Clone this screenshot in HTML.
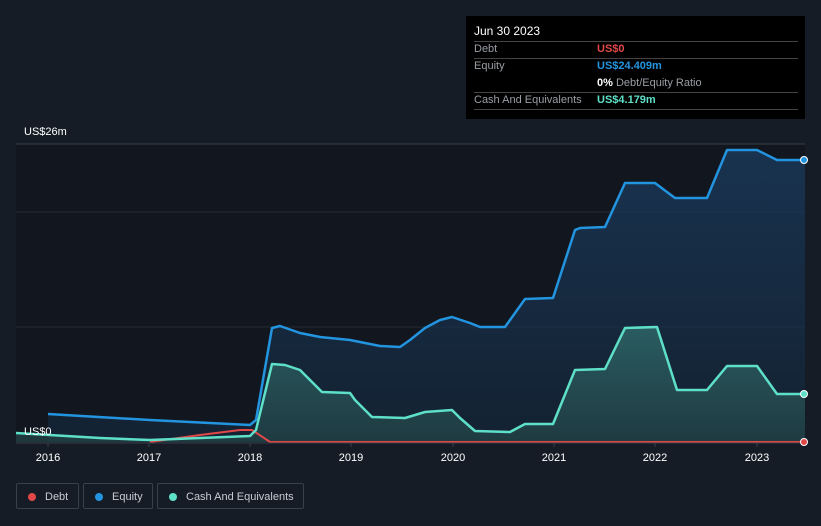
<!DOCTYPE html>
<html><head><meta charset="utf-8"><style>
body{margin:0;width:821px;height:526px;background:#161c26;font-family:"Liberation Sans",sans-serif;overflow:hidden;position:relative}
.tip{position:absolute;left:466px;top:16px;width:339px;height:103px;background:#000}
.tip div{position:absolute;font-size:11px;color:#9a9ea5}
.leg{position:absolute;top:483px;height:26px;border:1px solid #3a404a;border-radius:2px;color:#c8ccd2;font-size:11px;line-height:26px;box-sizing:border-box}
.leg i{position:absolute;left:11px;top:9px;width:8px;height:8px;border-radius:50%}
</style></head><body>
<svg width="821" height="526" style="position:absolute;left:0;top:0">
<defs>
<linearGradient id="eg" x1="0" y1="0" x2="0" y2="1"><stop offset="0" stop-color="#1a3a5c" stop-opacity=".8"/><stop offset="1" stop-color="#152a40" stop-opacity=".6"/></linearGradient>
<linearGradient id="cg" x1="0" y1="0" x2="0" y2="1"><stop offset="0" stop-color="#2f6a6a" stop-opacity=".8"/><stop offset="1" stop-color="#234548" stop-opacity=".7"/></linearGradient>
</defs>
<rect x="16" y="144" width="789" height="298" fill="#12161e"/>
<line x1="16" y1="144" x2="805" y2="144" stroke="#3a3f48"/>
<line x1="16" y1="212" x2="805" y2="212" stroke="#262b33"/>
<line x1="16" y1="327" x2="805" y2="327" stroke="#262b33"/>
<path d="M48,414 L150,420 L250,425 L256,420 L272,328 L280,326 L300,333 L320,337 L350,340 L380,346 L400,347 L410,340 L425,328 L440,320 L452,317 L470,323 L480,327 L505,327 L525,299 L553,298 L575,230 L580,228 L605,227 L625,183 L655,183 L675,198 L707,198 L727,150 L757,150 L777,160 L805,160 L805,442 L48,442Z" fill="url(#eg)"/>
<path d="M16,433 L100,438 L150,440 L250,436 L256,430 L272,364 L285,365 L300,370 L310,380 L322,392 L350,393 L355,400 L372,417 L405,418 L425,412 L452,410 L460,418 L475,431 L510,432 L525,424 L553,424 L575,370 L605,369 L625,328 L657,327 L677,390 L707,390 L727,366 L757,366 L777,394 L805,394 L805,442 L16,442Z" fill="url(#cg)"/>
<path d="M48,414 L150,420 L250,425 L256,420 L272,328 L280,326 L300,333 L320,337 L350,340 L380,346 L400,347 L410,340 L425,328 L440,320 L452,317 L470,323 L480,327 L505,327 L525,299 L553,298 L575,230 L580,228 L605,227 L625,183 L655,183 L675,198 L707,198 L727,150 L757,150 L777,160 L805,160" fill="none" stroke="#2394df" stroke-width="2.5" stroke-linejoin="round"/>
<path d="M150,442 L200,435 L240,430 L252,430 L270,442 L805,442" fill="none" stroke="#e04848" stroke-width="2"/>
<path d="M16,433 L100,438 L150,440 L250,436 L256,430 L272,364 L285,365 L300,370 L310,380 L322,392 L350,393 L355,400 L372,417 L405,418 L425,412 L452,410 L460,418 L475,431 L510,432 L525,424 L553,424 L575,370 L605,369 L625,328 L657,327 L677,390 L707,390 L727,366 L757,366 L777,394 L805,394" fill="none" stroke="#5ee0c8" stroke-width="2.5" stroke-linejoin="round"/>
<line x1="16" y1="443" x2="805" y2="443" stroke="#3a3f48"/>
<g stroke="#3a3f48"><line x1="48" y1="443" x2="48" y2="447"/><line x1="149" y1="443" x2="149" y2="447"/><line x1="250" y1="443" x2="250" y2="447"/><line x1="351" y1="443" x2="351" y2="447"/><line x1="453" y1="443" x2="453" y2="447"/><line x1="554" y1="443" x2="554" y2="447"/><line x1="655" y1="443" x2="655" y2="447"/><line x1="757" y1="443" x2="757" y2="447"/></g>
<circle cx="804" cy="160" r="3.5" fill="#2394df" stroke="#fff" stroke-width="1"/>
<circle cx="804" cy="394" r="3.5" fill="#5ee0c8" stroke="#fff" stroke-width="1"/>
<circle cx="804" cy="442" r="3.5" fill="#e04848" stroke="#fff" stroke-width="1"/>
<g fill="#fff" font-size="11" font-family="Liberation Sans" text-anchor="middle">
<text x="48" y="461">2016</text><text x="149" y="461">2017</text><text x="250" y="461">2018</text><text x="351" y="461">2019</text><text x="453" y="461">2020</text><text x="554" y="461">2021</text><text x="655" y="461">2022</text><text x="757" y="461">2023</text>
<text x="24" y="135" text-anchor="start">US$26m</text>
<text x="24" y="435" text-anchor="start">US$0</text>
</g>
</svg>
<div class="tip">
<div style="left:8px;top:8px;color:#fff;font-size:12px">Jun 30 2023</div>
<div style="left:8px;top:25px;width:324px;border-top:1px solid #444"></div>
<div style="left:8px;top:27px">Debt</div><div style="left:131px;top:27px;color:#e04848;font-weight:bold">US$0</div>
<div style="left:8px;top:42px;width:324px;border-top:1px solid #444"></div>
<div style="left:8px;top:44px">Equity</div><div style="left:131px;top:44px;color:#2394df;font-weight:bold">US$24.409m</div>
<div style="left:131px;top:61px"><b style="color:#fff">0%</b> Debt/Equity Ratio</div>
<div style="left:8px;top:76px;width:324px;border-top:1px solid #444"></div>
<div style="left:8px;top:78px">Cash And Equivalents</div><div style="left:131px;top:78px;color:#5ee0c8;font-weight:bold">US$4.179m</div>
<div style="left:8px;top:93px;width:324px;border-top:1px solid #444"></div>
</div>
<div class="leg" style="left:16px;width:63px"><i style="background:#e04848"></i><span style="position:absolute;left:28px">Debt</span></div>
<div class="leg" style="left:83px;width:70px"><i style="background:#2394df"></i><span style="position:absolute;left:28px">Equity</span></div>
<div class="leg" style="left:157px;width:147px"><i style="background:#5ee0c8"></i><span style="position:absolute;left:28px">Cash And Equivalents</span></div>
</body></html>
